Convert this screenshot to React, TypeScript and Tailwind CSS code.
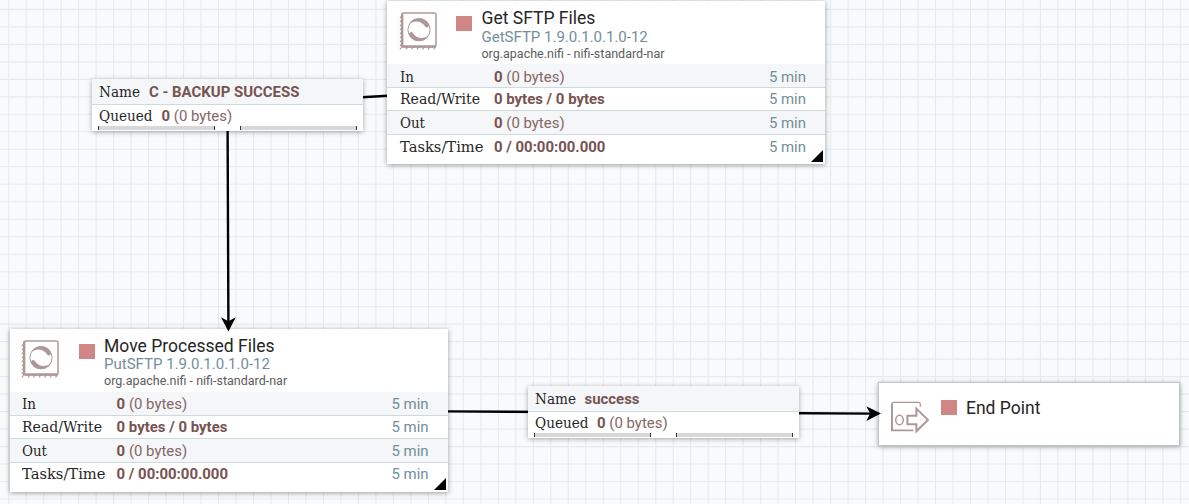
import React from "react";

const STEP = 17.487;
const columns = Array.from({ length: 69 }, (_, i) => 8.7 - STEP + i * STEP);
const lines = Array.from({ length: 30 }, (_, i) => 9.4 - STEP + i * STEP);

function Canvas() {
  return (
    <svg className="absolute inset-0" width="1189" height="504">
      <g stroke="#e5ebed" strokeWidth="1.1">
        {columns.map((x) => (
          <line key={x} x1={x} x2={x} y1="0" y2="504" />
        ))}
        {lines.map((y) => (
          <line key={y} x1="0" x2="1189" y1={y} y2={y} />
        ))}
      </g>
      <g stroke="#000" strokeWidth="2.4" fill="none">
        <path d="M388 95.8L227.6 105" />
        <path d="M227.6 130L228.4 322" />
        <path d="M447 411.4L872 413.6" />
      </g>
    </svg>
  );
}

function Arrowheads() {
  return (
    <svg className="pointer-events-none absolute inset-0" width="1189" height="504">
      <path d="M228.4 331.5L221 317.3L228.4 321.3L235.8 317.3Z" />
      <path d="M881 413.6L866.3 406.3L870.2 413.6L866.3 420.9Z" />
    </svg>
  );
}

const crescent = "M10 13.2A11.4 11.4 0 0 1 29.8 13A2.1 2.1 0 0 1 26 15.2C22.5 10 15.5 8.8 10 13.2Z";

function ProcessorIcon() {
  return (
    <svg width="38" height="39" viewBox="0 0 38 39" fill="none" stroke="#ad9897">
      <rect x="3" y="1.9" width="34" height="34" rx="1.6" strokeWidth="1.5" />
      <path d="M3.2 2.5V35.4H36.6" strokeWidth="2.3" />
      <path
        d="M3 5L.8 7M3 9L.8 11M3 13L.8 15M3 17L.8 19M3 21L.8 23M3 25L.8 27M3 29L.8 31M3 33L.8 35M3 36L.8 38.4M9 36L7 38.4M14.5 36L12.5 38.4M20 36L18 38.4M25.5 36L23.5 38.4M31 36L29 38.4M36.5 36L34.5 38.4"
        strokeWidth="1.1"
      />
      <circle cx="20" cy="18.7" r="11.1" strokeWidth="1" />
      <g fill="#ad9897" stroke="none">
        <path d={crescent} />
        <path d={crescent} transform="rotate(180 20 18.7)" />
      </g>
    </svg>
  );
}

function PortIcon() {
  return (
    <svg width="40" height="34" viewBox="0 0 40 34" fill="none" stroke="#ad9897">
      <path d="M30.3 6V3.2Q30.3 1.4 28.6 1.4H3.6Q1.9 1.4 1.9 3.2V30" strokeWidth="1.2" />
      <path d="M2 2.5V29.4H23.5" strokeWidth="1.9" />
      <ellipse cx="9.5" cy="19" rx="3.8" ry="4.7" strokeWidth="1.5" />
      <path d="M17.4 14.8H26.4V7.6L37.9 18.9L26.4 30.3V23.2H17.4Z" strokeWidth="2" />
    </svg>
  );
}

function Stop() {
  return <div className="h-[15px] w-4 shrink-0 bg-[#d18686]" />;
}

function Slab({ children, width }: { children: string; width: number }) {
  return (
    <svg className="block h-[18px] shrink-0 overflow-visible" width={width} height="18">
      <text x="0" y="14" textLength={width} lengthAdjust="spacingAndGlyphs" fill="#262626" className="font-['Roboto_Slab','DejaVu_Serif',serif] text-[14px]">
        {children}
      </text>
    </svg>
  );
}

function Value({ bold, rest }: { bold: string; rest?: string }) {
  return (
    <span className="text-[#775351]">
      <b className="font-bold">{bold}</b>
      {rest && <span className="text-[#866866]"> {rest}</span>}
    </span>
  );
}

const stats = [
  { label: "In", width: 14, bold: "0", rest: "(0 bytes)", row: "h-6 bg-[#f4f6f7] border-b pt-[3.5px]" },
  { label: "Read/Write", width: 80, bold: "0 bytes / 0 bytes", row: "h-[23px] border-b pt-[2px]" },
  { label: "Out", width: 25, bold: "0", rest: "(0 bytes)", row: "h-[24px] bg-[#f4f6f7] border-b pt-[3px]" },
  { label: "Tasks/Time", width: 83.5, bold: "0 / 00:00:00.000", row: "h-[28px] pt-[2.8px]" },
];

function Processor({ name, type, place }: { name: string; type: string; place: string }) {
  return (
    <section className={"absolute h-[163px] w-[438px] bg-white shadow-[0_1px_5px_rgba(0,0,0,0.38)] " + place}>
      <header className="flex h-[63px]">
        <div className="ml-[11.7px] mt-[10px] w-[38.3px]"><ProcessorIcon /></div>
        <div className="ml-[19px] mt-[15px]"><Stop /></div>
        <div className="ml-[9.5px] pt-[8px] whitespace-nowrap">
          <h2 className="text-[17.5px] leading-[19.5px] text-[#262626]">{name}</h2>
          <p className="-mt-px text-[15px] leading-[18px] text-[#728e9b]">{type}</p>
          <p className="text-[12.5px] leading-[16px] text-[#5c5c5c]">org.apache.nifi - nifi-standard-nar</p>
        </div>
      </header>
      {stats.map((s) => (
        <div key={s.label} className={"flex border-[#cfdadd] pl-[12.7px] pr-[19px] text-[14.95px] leading-[18px] " + s.row}>
          <div className="w-[94.3px]"><Slab width={s.width}>{s.label}</Slab></div>
          <Value bold={s.bold} rest={s.rest} />
          <span className="ml-auto text-[#728e9b]">5 min</span>
        </div>
      ))}
      <svg className="absolute right-[2px] bottom-[2px]" width="12" height="12"><path d="M12 0V12H0Z" /></svg>
    </section>
  );
}

function Gauge() {
  return <div className="h-1 w-[117px] border-x border-[#333] bg-[#d8d8d8]" />;
}

function Connection({ name, place }: { name: string; place: string }) {
  return (
    <section className={"absolute flex h-[52px] w-[271px] flex-col bg-white text-[14.95px] leading-[18px] shadow-[0_1px_5px_rgba(0,0,0,0.34)] " + place}>
      <div className="flex h-[26px] gap-[9px] border-b border-[#cfdadd] bg-[#f4f6f7] pl-[7px] pt-1">
        <Slab width={41}>Name</Slab>
        <Value bold={name} />
      </div>
      <div className="flex h-[21px] gap-[9px] pl-[7px] pt-[2px]">
        <Slab width={53.5}>Queued</Slab>
        <Value bold="0" rest="(0 bytes)" />
      </div>
      <div className="flex justify-between pl-[6px] pr-[6px]"><Gauge /><Gauge /></div>
    </section>
  );
}

export default function App() {
  return (
    <main className="relative h-[504px] w-[1189px] overflow-hidden bg-[#f9fafb] font-['Roboto',sans-serif]">
      <Canvas />
      <Processor name="Get SFTP Files" type="GetSFTP 1.9.0.1.0.1.0-12" place="left-[387px] top-px" />
      <Processor name="Move Processed Files" type="PutSFTP 1.9.0.1.0.1.0-12" place="left-[9.6px] top-[328.6px]" />
      <Connection name="C - BACKUP SUCCESS" place="left-[92px] top-[79px]" />
      <Connection name="success" place="left-[527.5px] top-[386px]" />
      <section className="absolute left-[878px] top-[382px] flex h-[64px] w-[301.5px] border border-[#c4c7c8] bg-white shadow-[0_1px_5px_rgba(0,0,0,0.32)]">
        <div className="ml-[11px] mt-[17.5px]"><PortIcon /></div>
        <div className="ml-[11px] mt-[17px]"><Stop /></div>
        <h2 className="ml-[9px] mt-[15px] text-[17.5px] leading-[20px] text-[#262626]">End Point</h2>
      </section>
      <Arrowheads />
    </main>
  );
}
